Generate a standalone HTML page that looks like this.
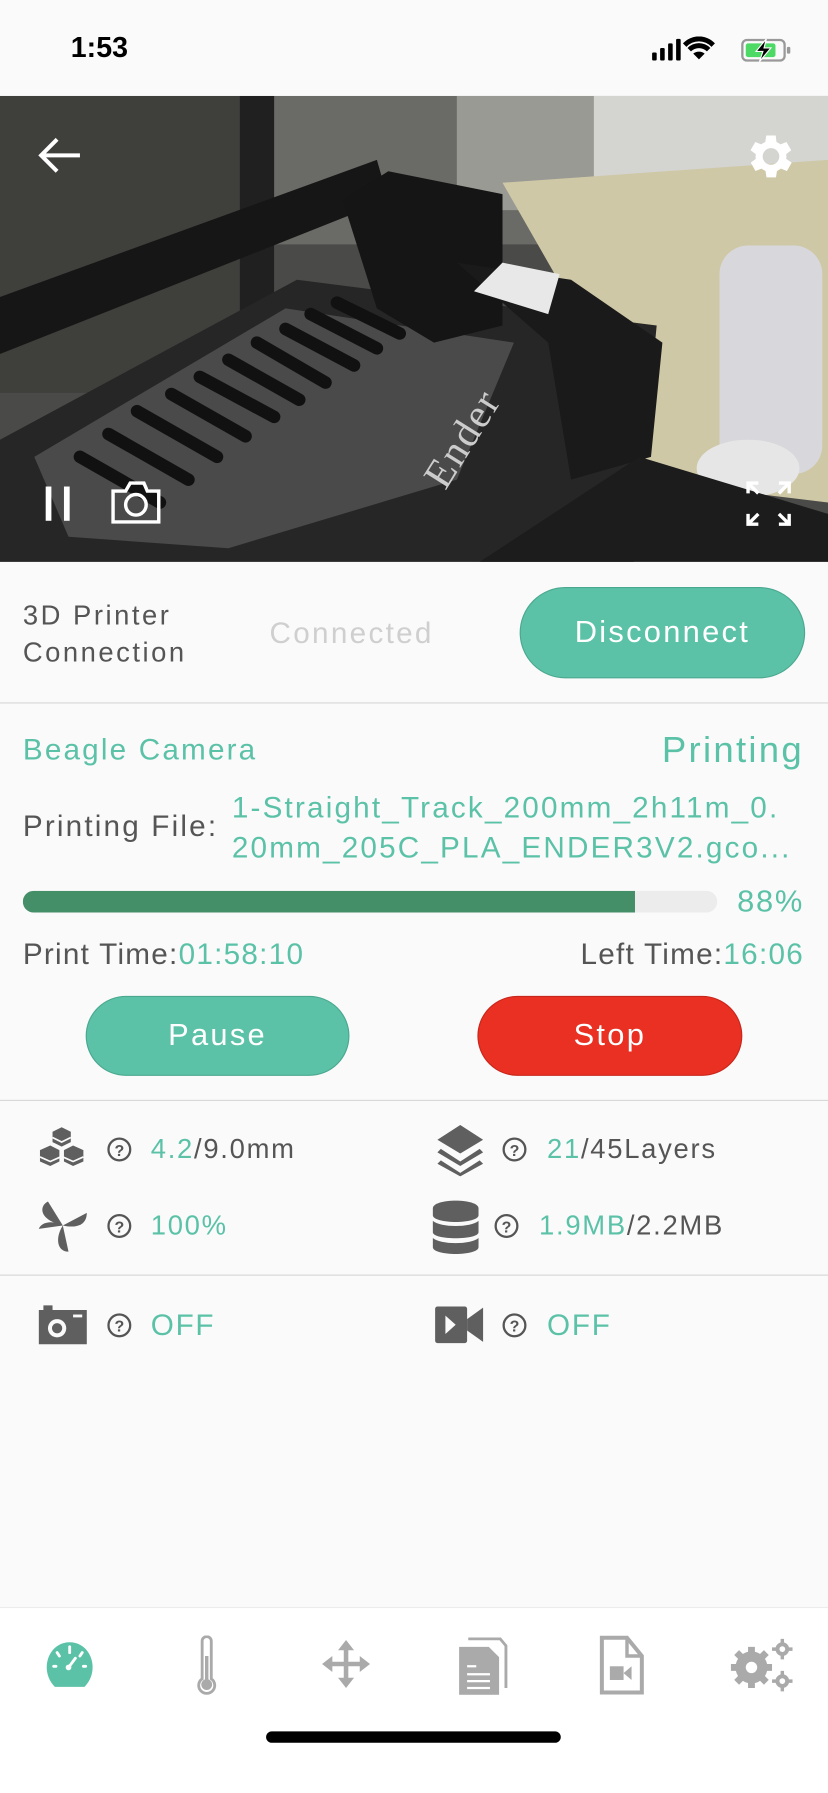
<!DOCTYPE html>
<html><head><meta charset="utf-8">
<style>
html,body{margin:0;padding:0;background:#fafafa;}
body{width:828px;height:1792px;overflow:hidden;font-family:"Liberation Sans",sans-serif;}
#w{position:absolute;left:0;top:0;width:725px;height:1569px;transform:scale(1.14207);transform-origin:0 0;background:#fafafa;letter-spacing:1.5px;}
.a{position:absolute;white-space:nowrap;}
.g{color:#5bc2a8;}
.d{color:#555;}
.btn{position:absolute;border-radius:40px;color:#fff;text-align:center;box-sizing:border-box;letter-spacing:2px;}
.sep{position:absolute;left:0;width:725px;height:1px;background:#d6d6d6;}
.q{position:absolute;width:21px;height:21px;border:2px solid #555;border-radius:50%;box-sizing:border-box;font-size:14px;font-weight:bold;color:#555;text-align:center;line-height:18px;letter-spacing:0;}
</style></head><body><div id="w">
<div class="a" style="left:62px;top:28px;font-size:25px;font-weight:bold;color:#000;letter-spacing:0;">1:53</div>
<svg class="a" style="left:570px;top:32px" width="130" height="24" viewBox="0 0 130 24">
<rect x="1" y="14" width="4" height="7" rx="1" fill="#000"/><rect x="8" y="10" width="4" height="11" rx="1" fill="#000"/><rect x="15" y="6" width="4" height="15" rx="1" fill="#000"/><rect x="22" y="2" width="4" height="19" rx="1" fill="#000"/>
<path d="M42 20 L37 15 A8 8 0 0 1 47 15 Z M32 10 A14 14 0 0 1 52 10 L49 13 A10 10 0 0 0 35 13 Z M28 6 A19 19 0 0 1 56 6 L53 9 A15 15 0 0 0 31 9Z" fill="#000"/>
<rect x="80" y="3" width="37" height="18" rx="4" fill="none" stroke="#999" stroke-width="2"/>
<rect x="83" y="6" width="26" height="12" rx="2" fill="#4cd964"/>
<rect x="119" y="9" width="3" height="6" rx="1" fill="#999"/>
<path d="M101 2 L92 13 L98 13 L95 22 L105 10 L99 10 Z" fill="#000" stroke="#fff" stroke-width="1"/>
</svg>
<svg class="a" style="left:0;top:84px" width="725" height="408" viewBox="0 84 725 408">
<rect x="0" y="84" width="725" height="408" fill="#4a4a48"/>
<rect x="240" y="84" width="250" height="130" fill="#6a6a66"/>
<rect x="400" y="84" width="325" height="100" fill="#9a9a94"/>
<rect x="520" y="84" width="205" height="80" fill="#d4d4d0"/>
<polygon points="440,160 725,140 725,440 560,420 520,300" fill="#cfc8a6"/>
<rect x="0" y="84" width="210" height="260" fill="#3f3f3c"/>
<rect x="210" y="84" width="30" height="200" fill="#202020"/>
<polygon points="0,260 330,140 340,175 0,310" fill="#161616"/>
<polygon points="0,385 260,245 575,285 555,492 0,492" fill="#262626"/>
<polygon points="30,400 250,270 450,300 400,420 200,480 60,470" fill="#5a5a5a" opacity="0.7"/>
<g stroke="#111" stroke-width="11" stroke-linecap="round">
<line x1="70" y1="400" x2="140" y2="440"/><line x1="95" y1="380" x2="165" y2="420"/><line x1="120" y1="360" x2="190" y2="400"/><line x1="150" y1="345" x2="215" y2="382"/><line x1="175" y1="330" x2="240" y2="365"/><line x1="200" y1="315" x2="262" y2="350"/><line x1="225" y1="300" x2="285" y2="335"/><line x1="250" y1="288" x2="310" y2="320"/><line x1="272" y1="275" x2="330" y2="305"/><line x1="295" y1="265" x2="350" y2="292"/>
</g>
<polygon points="300,175 340,150 440,170 440,285 380,300 330,270" fill="#151515"/>
<polygon points="400,230 500,245 580,300 570,400 500,420 480,300" fill="#1a1a1a"/>
<polygon points="415,255 440,230 490,240 480,275" fill="#e8e8e8"/>
<rect x="630" y="215" width="90" height="200" rx="25" fill="#d8d8dc"/>
<ellipse cx="655" cy="410" rx="45" ry="25" fill="#e6e6e6"/>
<polygon points="420,492 560,400 725,450 725,492" fill="#1c1c1c"/>
<text x="390" y="430" fill="#ccc" font-family="Liberation Serif" font-size="36" transform="rotate(-58 390 430)">Ender</text>
</svg>
<svg class="a" style="left:30px;top:118px" width="44" height="36" viewBox="0 0 44 36"><path d="M40 18 H6 M20 4 L6 18 L20 32" stroke="#fff" stroke-width="3.5" fill="none"/></svg>
<svg class="a" style="left:648px;top:112px" width="50" height="50" viewBox="0 0 24 24"><path fill="#fff" d="M19.4 13a7.5 7.5 0 0 0 0-2l2.1-1.6-2-3.5-2.5 1a7.3 7.3 0 0 0-1.7-1L15 3.2h-4l-.4 2.7a7.3 7.3 0 0 0-1.7 1l-2.5-1-2 3.5L6.6 11a7.5 7.5 0 0 0 0 2l-2.1 1.6 2 3.5 2.5-1c.5.4 1.100.7 1.700 1l.4 2.7h4l.4-2.7c.6-.3 1.2-.6 1.7-1l2.5 1 2-3.5zM13 15.5a3.5 3.5 0 1 1 0-7 3.5 3.5 0 0 1 0 7z"/></svg>
<div class="a" style="left:40px;top:426px;width:5px;height:30px;background:#fff"></div>
<div class="a" style="left:56px;top:426px;width:5px;height:30px;background:#fff"></div>
<svg class="a" style="left:96px;top:420px" width="46" height="40" viewBox="0 0 46 40"><path d="M3 10 H14 L18 3 H30 L33 10 H43 V37 H3 Z" fill="none" stroke="#fff" stroke-width="3"/><circle cx="23" cy="22" r="9" fill="none" stroke="#fff" stroke-width="3"/></svg>
<svg class="a" style="left:652px;top:420px" width="42" height="42" viewBox="0 0 42 42" stroke="#fff" stroke-width="3" fill="none"><path d="M3 12V3h9M3 3l9 9M39 12V3h-9M39 3l-9 9M3 30v9h9M3 39l9-9M39 30v9h-9M39 39l-9-9"/></svg>
<div class="a d" style="left:20px;top:524px;font-size:24px;line-height:32px;letter-spacing:2.2px;">3D Printer<br>Connection</div>
<div class="a" style="left:236px;top:539px;font-size:26px;color:#cfcfcf;letter-spacing:2px;">Connected</div>
<div class="btn" style="left:455px;top:514px;width:250px;height:80px;background:#5bc2a8;border:1.5px solid #4aa88f;font-size:27px;line-height:77px;">Disconnect</div>
<div class="sep" style="top:615px"></div>
<div class="a g" style="left:20px;top:641px;font-size:26px;letter-spacing:1.9px;">Beagle Camera</div>
<div class="a g" style="right:21px;top:638px;font-size:32px;letter-spacing:2px;">Printing</div>
<div class="a d" style="left:20px;top:708px;font-size:26px;letter-spacing:1.9px;">Printing File:</div>
<div class="a g" style="left:203px;top:690px;font-size:26px;line-height:35px;letter-spacing:1.9px;">1-Straight_Track_200mm_2h11m_0.<br>20mm_205C_PLA_ENDER3V2.gco...</div>
<div class="a" style="left:20px;top:780px;width:608px;height:19px;border-radius:10px;background:#ececec;overflow:hidden;"><div style="width:536px;height:19px;background:#458f68;"></div></div>
<div class="a g" style="right:21px;top:774px;font-size:27px;">88%</div>
<div class="a d" style="left:20px;top:820px;font-size:26px;letter-spacing:1.1px;">Print Time:<span class="g">01:58:10</span></div>
<div class="a d" style="right:21px;top:820px;font-size:26px;letter-spacing:1.1px;">Left Time:<span class="g">16:06</span></div>
<div class="btn" style="left:75px;top:872px;width:231px;height:70px;background:#5bc2a8;border:1.5px solid #4aa88f;font-size:27px;line-height:67px;">Pause</div>
<div class="btn" style="left:418px;top:872px;width:232px;height:70px;background:#e93023;border:1.5px solid #c9261b;font-size:27px;line-height:67px;">Stop</div>
<div class="sep" style="top:963px"></div>
<svg class="a" style="left:30px;top:986px" width="48" height="42" viewBox="0 0 48 42" fill="#5f5f5f"><path d="M24 1l8 4v9l-8 4-8-4V5z"/><path d="M14 17l8 4v10l-8 4-9-4V21z"/><path d="M34 17l9 4v10l-9 4-8-4V21z"/><path d="M5 27 l9 4 9-4 M25 27l9 4 9-4 M16 10l8 4 8-4" stroke="#fafafa" stroke-width="1.5" fill="none"/></svg>
<div class="q" style="left:94px;top:996px">?</div>
<div class="a" style="left:132px;top:993px;font-size:24px;"><span class="g">4.2</span><span class="d">/9.0mm</span></div>
<svg class="a" style="left:382px;top:984px" width="42" height="46" viewBox="0 0 42 46" fill="#5f5f5f"><path d="M21 1l20 13-20 12L1 14z"/><path d="M4 22l17 11 17-11 3 3-20 12L1 25z"/><path d="M4 32l17 11 17-11 3 3-20 11L1 35z"/></svg>
<div class="q" style="left:440px;top:996px">?</div>
<div class="a" style="left:479px;top:993px;font-size:24px;"><span class="g">21</span><span class="d">/45Layers</span></div>
<svg class="a" style="left:32px;top:1050px" width="46" height="46" viewBox="0 0 46 46" fill="#5f5f5f"><path d="M23 23 L10 2 C2 6 2 18 23 23Z"/><path d="M23 23 L44 12 C44 22 36 26 23 23Z"/><path d="M23 23 L28 46 C18 46 16 34 23 23Z"/><path d="M23 23 L2 26 C4 20 14 18 23 23Z"/></svg>
<div class="q" style="left:94px;top:1063px">?</div>
<div class="a g" style="left:132px;top:1060px;font-size:24px;">100%</div>
<svg class="a" style="left:378px;top:1050px" width="42" height="48" viewBox="0 0 42 48" fill="#5f5f5f"><path d="M1 8 C1 -1 41 -1 41 8 V14 C41 22 1 22 1 14Z"/><path d="M1 19 C8 25 34 25 41 19 V29 C41 36 1 36 1 29Z"/><path d="M1 34 C8 40 34 40 41 34 V42 C41 50 1 50 1 42Z"/></svg>
<div class="q" style="left:433px;top:1063px">?</div>
<div class="a" style="left:472px;top:1060px;font-size:24px;"><span class="g">1.9MB</span><span class="d">/2.2MB</span></div>
<div class="sep" style="top:1116px"></div>
<svg class="a" style="left:33px;top:1142px" width="44" height="36" viewBox="0 0 44 36" fill="#5f5f5f"><path d="M1 5 H5 V1 H13 V5 H43 V35 H1 Z"/><circle cx="17" cy="21" r="8" fill="#fafafa"/><circle cx="17" cy="21" r="4.5"/><rect x="31" y="9" width="8" height="2.5" fill="#fafafa"/></svg>
<div class="q" style="left:94px;top:1150px">?</div>
<div class="a g" style="left:132px;top:1145px;font-size:26px;">OFF</div>
<svg class="a" style="left:380px;top:1143px" width="44" height="34" viewBox="0 0 44 34" fill="#5f5f5f"><rect x="1" y="1" width="28" height="32" rx="2"/><path d="M29 12 L43 2 V32 L29 22Z"/><path d="M10 9 L19 17 L10 25Z" fill="#fafafa"/></svg>
<div class="q" style="left:440px;top:1150px">?</div>
<div class="a g" style="left:479px;top:1145px;font-size:26px;">OFF</div>
<div class="a" style="left:0;top:1407px;width:725px;height:162px;background:#fff;border-top:1px solid #ececec;"></div>
<svg class="a" style="left:38px;top:1433px" width="46" height="46" viewBox="0 0 46 46"><path d="M10 44 C-4 30 4 5 23 5 C42 5 50 30 36 44Z" fill="#5bc2a8"/><g stroke="#fff" stroke-width="2.5" stroke-linecap="round"><line x1="23" y1="9" x2="23" y2="14"/><line x1="12" y1="14" x2="14" y2="17"/><line x1="34" y1="14" x2="32" y2="17"/><line x1="9" y1="26" x2="11" y2="26"/><line x1="35" y1="26" x2="37" y2="26"/><line x1="22" y1="27" x2="28" y2="19"/></g><circle cx="22" cy="27" r="2.5" fill="#fff"/></svg>
<svg class="a" style="left:170px;top:1432px" width="22" height="52" viewBox="0 0 22 52" fill="none" stroke="#aaa" stroke-width="2.5"><path d="M7 38 V5 A4 4 0 0 1 15 5 V38 A7 7 0 1 1 7 38Z"/><path d="M11 18V42" stroke-width="3"/><circle cx="11" cy="43" r="3.5" fill="#aaa"/></svg>
<svg class="a" style="left:282px;top:1436px" width="42" height="42" viewBox="0 0 42 42" fill="#aaa"><path d="M21 0 L28 9 H23 V19 H33 V14 L42 21 L33 28 V23 H23 V33 H28 L21 42 L14 33 H19 V23 H9 V28 L0 21 L9 14 V19 H19 V9 H14Z"/></svg>
<svg class="a" style="left:400px;top:1432px" width="46" height="52" viewBox="0 0 46 52"><path d="M10 3 H38 L43 9 V46" fill="none" stroke="#aaa" stroke-width="2.5"/><path d="M2 10 H28 L37 19 V52 H2Z" fill="#aaa"/><g stroke="#fff" stroke-width="2"><line x1="9" y1="27" x2="17" y2="27"/><line x1="9" y1="34" x2="29" y2="34"/><line x1="9" y1="40" x2="29" y2="40"/><line x1="9" y1="46" x2="29" y2="46"/></g></svg>
<svg class="a" style="left:524px;top:1432px" width="40" height="52" viewBox="0 0 40 52"><path d="M3 2 H25 L38 18 V50 H3Z" fill="none" stroke="#aaa" stroke-width="3.5"/><path d="M25 2 V18 H38" fill="none" stroke="#aaa" stroke-width="3"/><rect x="10" y="27" width="12" height="12" fill="#aaa"/><path d="M22 33 L29 27 V39Z" fill="#aaa"/></svg>
<svg class="a" style="left:634px;top:1432px" width="60" height="52" viewBox="0 0 60 52" fill="#aaa"><path d="M24 28 m-14 0 a14 14 0 1 0 28 0 a14 14 0 1 0 -28 0Z"/><g stroke="#aaa" stroke-width="6"><line x1="24" y1="10" x2="24" y2="46"/><line x1="6" y1="28" x2="42" y2="28"/><line x1="11" y1="15" x2="37" y2="41"/><line x1="37" y1="15" x2="11" y2="41"/></g><circle cx="24" cy="28" r="5" fill="#fff"/><circle cx="51" cy="12" r="6"/><circle cx="51" cy="40" r="6"/><g stroke="#aaa" stroke-width="3"><line x1="51" y1="3" x2="51" y2="21"/><line x1="42" y1="12" x2="60" y2="12"/><line x1="51" y1="31" x2="51" y2="49"/><line x1="42" y1="40" x2="60" y2="40"/></g><circle cx="51" cy="12" r="2.5" fill="#fff"/><circle cx="51" cy="40" r="2.5" fill="#fff"/></svg>
<div class="a" style="left:233px;top:1516px;width:258px;height:10px;border-radius:5px;background:#000;"></div>
</div></body></html>
